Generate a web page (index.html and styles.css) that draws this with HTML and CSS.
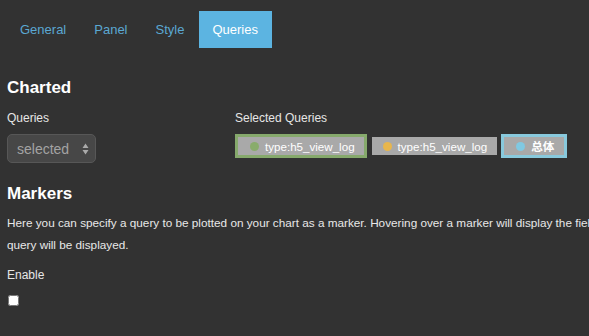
FILE: index.html
```html
<!DOCTYPE html>
<html lang="en">
<head>
    <meta charset="UTF-8">
    <title>Panel Editor - Queries</title>
    <link rel="stylesheet" href="styles.css">
</head>
<body>
    <ul class="tabs">
        <li><a href="#">General</a></li>
        <li><a href="#">Panel</a></li>
        <li><a href="#">Style</a></li>
        <li class="active"><a href="#">Queries</a></li>
    </ul>

    <div class="section">
        <h4>Charted</h4>
        <div class="row">
            <div class="field">
                <label>Queries</label>
                <div class="select">
                    <span>selected</span>
                    <svg width="7" height="12" viewBox="0 0 7 12"><path d="M3.5 0.5 L6.5 5 L0.5 5 Z M3.5 11.5 L6.5 7 L0.5 7 Z" fill="#aaa"/></svg>
                </div>
            </div>
            <div class="field">
                <label>Selected Queries</label>
                <div class="tags">
                    <span class="tag tag-green"><i class="dot" style="background:#89ac6c"></i>type:h5_view_log</span>
                    <span class="tag"><i class="dot" style="background:#e8b64c"></i>type:h5_view_log</span>
                    <span class="tag tag-blue"><i class="dot" style="background:#80c9e2"></i>总体</span>
                </div>
            </div>
        </div>
    </div>

    <div class="section">
        <h4>Markers</h4>
        <p>Here you can specify a query to be plotted on your chart as a marker. Hovering over a marker will display the field you define below. If no field is specified, the query will be displayed.</p>
        <label>Enable</label>
        <input type="checkbox" class="check">
    </div>
</body>
</html>
```

FILE: styles.css
```css
body {
    margin: 0;
    padding: 0 7px;
    background-color: #323232;
    color: #e8e8e8;
    font-family: 'Liberation Sans', Arial, sans-serif;
    font-size: 12px;
    overflow: hidden;
    width: 840px;
}

.tabs {
    list-style: none;
    margin: 11px 0 0 0;
    padding: 0;
    display: flex;
    height: 37px;
}

.tabs li {
    margin-right: 1px;
}

.tabs a {
    display: block;
    height: 37px;
    line-height: 37px;
    padding: 0 14px 0 13px;
    font-size: 13px;
    color: #5ba8d2;
    text-decoration: none;
}

.tabs li.active a {
    background-color: #5cb4e1;
    color: #fff;
}

.section h4 {
    margin: 0;
    font-size: 17px;
    font-weight: bold;
    color: #fff;
}

.section:nth-of-type(1) {
    margin-top: 30px;
}

.section:nth-of-type(2) {
    margin-top: 21px;
}

.row {
    display: flex;
    margin-top: 13px;
}

.field label,
.section label {
    display: block;
    font-size: 12px;
    color: #e6e6e6;
    margin-bottom: 9px;
}

.field:first-child {
    width: 228px;
}

.select {
    box-sizing: border-box;
    width: 89px;
    height: 29px;
    background-color: #474747;
    border: 1px solid #575757;
    border-radius: 5px;
    display: flex;
    align-items: center;
    justify-content: space-between;
    padding: 0 6px 0 9px;
    font-size: 14px;
    color: #a3a3a3;
}

.tags {
    display: flex;
    align-items: center;
    gap: 5px;
}

.tag {
    display: flex;
    align-items: center;
    height: 18px;
    padding: 0 10px 0 11px;
    background-color: #a9a9a9;
    color: #fff;
    font-size: 11.6px;
}

.tag-green {
    border: 3px solid #86a96c;
    padding: 0 9px 0 12px;
}

.tag-blue {
    border: 3px solid #88c9dc;
    padding: 0 10px 0 12px;
    margin-left: -1px;
    font-family: 'Liberation Sans', 'Noto Sans CJK SC', sans-serif;
    font-weight: bold;
}

.dot {
    display: inline-block;
    width: 9px;
    height: 9px;
    border-radius: 50%;
    margin-right: 6px;
}

.section p {
    margin: 8px 0 0 0;
    line-height: 22px;
    font-size: 11.75px;
    color: #e8e8e8;
}

.section p + label {
    margin-top: 12px;
    margin-bottom: 13px;
}

.check {
    margin: 0 0 0 1px;
    width: 11px;
    height: 11px;
}
```
